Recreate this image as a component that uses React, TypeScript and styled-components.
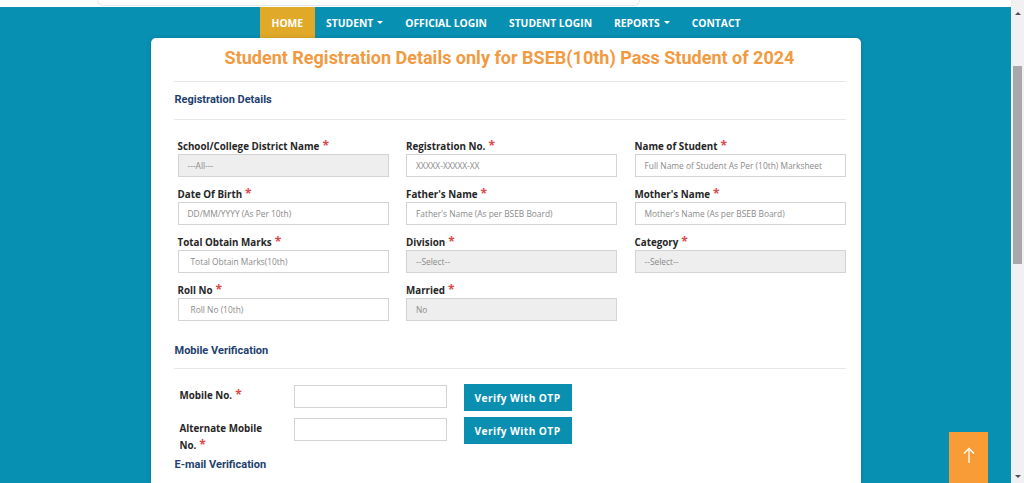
import React from 'react'
import styled, { createGlobalStyle } from 'styled-components'

const GlobalStyle = createGlobalStyle`
  html, body {
    margin: 0;
    padding: 0;
    overflow: hidden;
    background: #ffffff;
  }
  * {
    box-sizing: border-box;
  }
`

const Shell = styled.div`
  display: flex;
  width: 1024px;
  height: 483px;
`

const Main = styled.div`
  position: relative;
  flex: 1;
  display: flex;
  flex-direction: column;
  background: #0890b3;
  overflow: hidden;
`

const TopStrip = styled.div`
  height: 7px;
  background: #ffffff;
  flex-shrink: 0;
`

const HeaderEdge = styled.div`
  margin-left: 97px;
  width: 543px;
  height: 6px;
  border: 1px solid #e4e6ea;
  border-top: none;
  border-radius: 0 0 8px 8px;
`

const Nav = styled.nav`
  display: flex;
  justify-content: center;
  height: 31px;
  flex-shrink: 0;
`

const NavItem = styled.a<{ active?: boolean }>`
  display: flex;
  align-items: center;
  gap: 4px;
  padding: 0 ${(p) => (p.active ? 12 : 11)}px;
  background: ${(p) => (p.active ? '#e1a928' : 'transparent')};
  color: #ffffff;
  font-family: 'Open Sans', sans-serif;
  font-weight: 700;
  font-size: 10.3px;
  text-transform: uppercase;
  cursor: pointer;
`

const Caret = styled.span`
  display: inline-block;
  width: 0;
  height: 0;
  border-left: 3px solid transparent;
  border-right: 3px solid transparent;
  border-top: 3px solid #ffffff;
`

const Card = styled.div`
  width: 710px;
  margin: 0 auto;
  flex: 1;
  background: #ffffff;
  border-radius: 5px 5px 0 0;
  box-shadow: 0 0 4px rgba(0, 0, 0, 0.15);
  padding: 7px 15px 0 23px;
`

const Title = styled.h1`
  margin: 0;
  text-align: center;
  color: #f29a3f;
  font-family: Roboto, sans-serif;
  font-weight: 700;
  font-size: 18px;
  line-height: 26px;
`

const Rule = styled.hr<{ gap: number }>`
  margin: ${(p) => p.gap}px 0 0;
  border: none;
  border-top: 1px solid #e6e6e6;
`

const SectionHead = styled.h2<{ top: number }>`
  margin: ${(p) => p.top}px 0 0 1px;
  color: #233f6f;
  font-family: Roboto, sans-serif;
  font-weight: 700;
  font-size: 11px;
  line-height: 14px;
`

const FieldGrid = styled.div`
  display: grid;
  grid-template-columns: repeat(3, 211px);
  column-gap: 17.5px;
  row-gap: 9px;
  margin: 18px 0 0 4px;
`

const Field = styled.div`
  display: flex;
  flex-direction: column;
  gap: 2px;
`

const Label = styled.label`
  display: block;
  height: 14px;
  padding-top: 2px;
  color: #262626;
  font-family: 'Open Sans', sans-serif;
  font-weight: 700;
  font-size: 9.8px;
  line-height: 14px;
`

const Star = styled.span`
  color: #e04848;
  font-size: 12px;
  line-height: 1;
  margin-left: 3px;
`

const Input = styled.div<{ disabled?: boolean; indent?: number }>`
  height: 23px;
  display: flex;
  align-items: center;
  padding-left: ${(p) => p.indent ?? 9}px;
  border: 1px solid #d3d3d3;
  background: ${(p) => (p.disabled ? '#eeeeee' : '#ffffff')};
  color: #8a8a8a;
  font-family: 'Open Sans', sans-serif;
  font-size: 8.4px;
  white-space: nowrap;
  overflow: hidden;
`

const MobileList = styled.div`
  display: flex;
  flex-direction: column;
  gap: 6px;
  margin: 15px 0 0 6px;
`

const MobileRow = styled.div`
  display: flex;
  align-items: flex-start;
`

const MobileLabel = styled.div`
  width: 114px;
  padding: 3px 14px 0 0;
  color: #262626;
  font-family: 'Open Sans', sans-serif;
  font-weight: 700;
  font-size: 9.8px;
  line-height: 17px;
`

const MobileInput = styled.div`
  width: 153px;
  height: 23px;
  margin-top: 1px;
  border: 1px solid #d3d3d3;
  background: #ffffff;
`

const OtpButton = styled.button`
  width: 108px;
  height: 27px;
  margin-left: 17px;
  border: none;
  background: #0a8fb1;
  color: #ffffff;
  font-family: 'Open Sans', sans-serif;
  font-weight: 700;
  font-size: 10.2px;
  letter-spacing: 0.4px;
  cursor: pointer;
`

const BackToTop = styled.div`
  position: absolute;
  right: 23px;
  bottom: 0;
  width: 39px;
  height: 51px;
  background: #f89d35;
  display: flex;
  justify-content: center;
  padding-top: 15px;
`

const ScrollBar = styled.div`
  width: 13px;
  background: #f1f1f1;
  display: flex;
  flex-direction: column;
  align-items: center;
`

const ScrollArrow = styled.div<{ down?: boolean }>`
  width: 0;
  height: 0;
  border-left: 3px solid transparent;
  border-right: 3px solid transparent;
  ${(p) =>
    p.down
      ? 'border-top: 3px solid #505050; margin-top: auto; margin-bottom: 5px;'
      : 'border-bottom: 3px solid #505050; margin-top: 12px;'}
`

const Thumb = styled.div`
  width: 9px;
  height: 198px;
  margin-top: 51px;
  background: #a8a8a8;
`

const fields = [
  { label: 'School/College District Name', value: '---All---', disabled: true },
  { label: 'Registration No.', value: 'XXXXX-XXXXX-XX' },
  { label: 'Name of Student', value: 'Full Name of Student As Per (10th) Marksheet' },
  { label: 'Date Of Birth', value: 'DD/MM/YYYY (As Per 10th)' },
  { label: "Father's Name", value: "Father's Name (As per BSEB Board)" },
  { label: "Mother's Name", value: "Mother's Name (As per BSEB Board)" },
  { label: 'Total Obtain Marks', value: 'Total Obtain Marks(10th)', indent: 12 },
  { label: 'Division', value: '--Select--', disabled: true },
  { label: 'Category', value: '--Select--', disabled: true },
  { label: 'Roll No', value: 'Roll No (10th)', indent: 12 },
  { label: 'Married', value: 'No', disabled: true },
]

const App = () => (
  <>
    <GlobalStyle />
    <Shell>
      <Main>
        <TopStrip>
          <HeaderEdge />
        </TopStrip>
        <Nav>
          <NavItem active>Home</NavItem>
          <NavItem>
            Student <Caret />
          </NavItem>
          <NavItem>Official Login</NavItem>
          <NavItem>Student Login</NavItem>
          <NavItem>
            Reports <Caret />
          </NavItem>
          <NavItem>Contact</NavItem>
        </Nav>
        <Card>
          <Title>Student Registration Details only for BSEB(10th) Pass Student of 2024</Title>
          <Rule gap={10} />
          <SectionHead top={11}>Registration Details</SectionHead>
          <Rule gap={12} />
          <FieldGrid>
            {fields.map((f) => (
              <Field key={f.label}>
                <Label>
                  {f.label}
                  <Star>*</Star>
                </Label>
                <Input disabled={f.disabled} indent={f.indent}>
                  {f.value}
                </Input>
              </Field>
            ))}
          </FieldGrid>
          <SectionHead top={23}>Mobile Verification</SectionHead>
          <Rule gap={10} />
          <MobileList>
            <MobileRow>
              <MobileLabel>
                Mobile No.<Star>*</Star>
              </MobileLabel>
              <MobileInput />
              <OtpButton>Verify With OTP</OtpButton>
            </MobileRow>
            <MobileRow>
              <MobileLabel>
                Alternate Mobile No.<Star>*</Star>
              </MobileLabel>
              <MobileInput />
              <OtpButton>Verify With OTP</OtpButton>
            </MobileRow>
          </MobileList>
          <SectionHead top={4}>E-mail Verification</SectionHead>
        </Card>
        <BackToTop>
          <svg width="12" height="17" viewBox="0 0 12 17" fill="none" stroke="#ffffff" strokeWidth="1.3">
            <path d="M6 16V1.5M1 6.5L6 1.5L11 6.5" />
          </svg>
        </BackToTop>
      </Main>
      <ScrollBar>
        <ScrollArrow />
        <Thumb />
        <ScrollArrow down />
      </ScrollBar>
    </Shell>
  </>
)

export default App
